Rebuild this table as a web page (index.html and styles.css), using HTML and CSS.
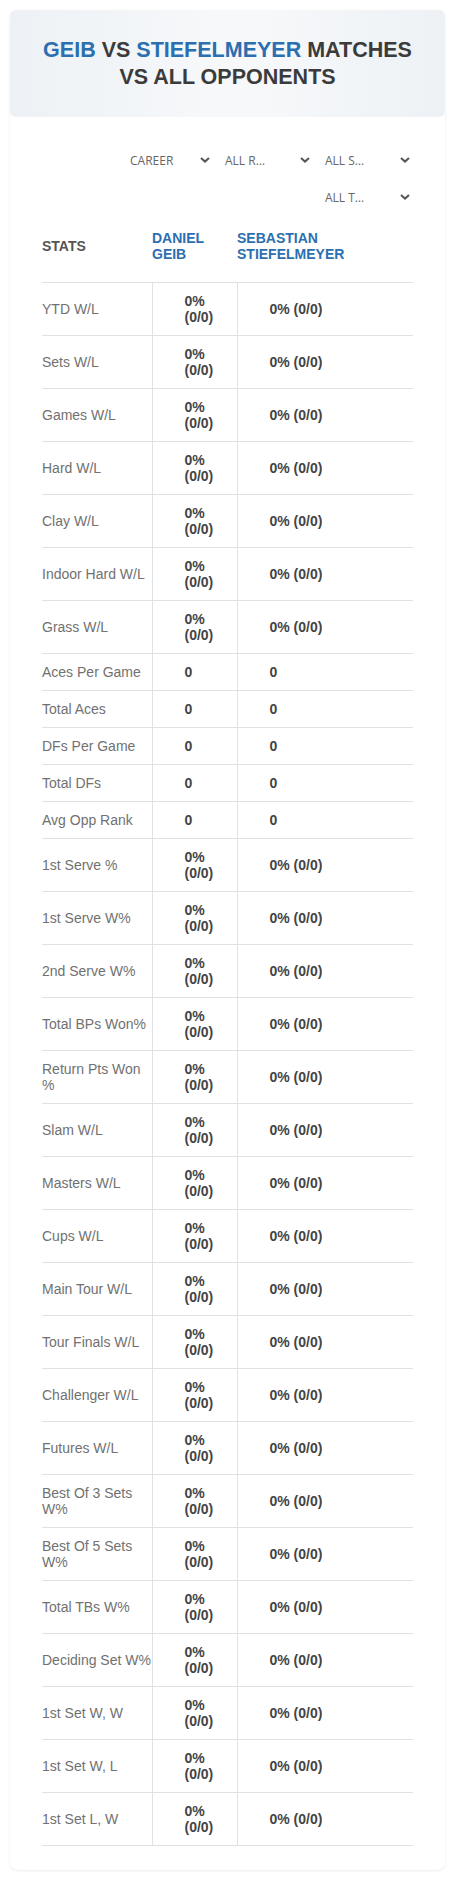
FILE: index.html
```html
<!DOCTYPE html>
<html lang="en">
<head>
    <meta charset="UTF-8">
    <meta name="viewport" content="width=device-width, initial-scale=1.0">
    <title>Geib vs Stiefelmeyer</title>
    <link rel="stylesheet" href="styles.css">
</head>
<body>
    <div class="card">
        <!-- Sarlavha -->
        <div class="title-box">
            <h1><span class="blue">GEIB</span> VS <span class="blue">STIEFELMEYER</span> MATCHES<br>VS ALL OPPONENTS</h1>
        </div>

        <div class="card-body">
            <!-- Filtrlar -->
            <div class="filters">
                <div class="filter first">CAREER<svg class="chev" viewBox="0 0 10 6"><path d="M1 1l4 3.6L9 1" /></svg></div>
                <div class="filter">ALL R…<svg class="chev" viewBox="0 0 10 6"><path d="M1 1l4 3.6L9 1" /></svg></div>
                <div class="filter">ALL S…<svg class="chev" viewBox="0 0 10 6"><path d="M1 1l4 3.6L9 1" /></svg></div>
                <div class="filter">ALL T…<svg class="chev" viewBox="0 0 10 6"><path d="M1 1l4 3.6L9 1" /></svg></div>
            </div>

            <table class="stats">
                <colgroup>
                    <col class="c-label">
                    <col class="c-p1">
                    <col class="c-p2">
                </colgroup>
                <thead>
                    <tr>
                        <th>STATS</th>
                        <th class="player">DANIEL GEIB</th>
                        <th class="player">SEBASTIAN STIEFELMEYER</th>
                    </tr>
                </thead>
                <tbody id="stats-body"></tbody>
            </table>
        </div>
    </div>

    <script>
        const rows = [
            ["YTD W/L", "0% (0/0)"],
            ["Sets W/L", "0% (0/0)"],
            ["Games W/L", "0% (0/0)"],
            ["Hard W/L", "0% (0/0)"],
            ["Clay W/L", "0% (0/0)"],
            ["Indoor Hard W/L", "0% (0/0)"],
            ["Grass W/L", "0% (0/0)"],
            ["Aces Per Game", "0"],
            ["Total Aces", "0"],
            ["DFs Per Game", "0"],
            ["Total DFs", "0"],
            ["Avg Opp Rank", "0"],
            ["1st Serve %", "0% (0/0)"],
            ["1st Serve W%", "0% (0/0)"],
            ["2nd Serve W%", "0% (0/0)"],
            ["Total BPs Won%", "0% (0/0)"],
            ["Return Pts Won %", "0% (0/0)"],
            ["Slam W/L", "0% (0/0)"],
            ["Masters W/L", "0% (0/0)"],
            ["Cups W/L", "0% (0/0)"],
            ["Main Tour W/L", "0% (0/0)"],
            ["Tour Finals W/L", "0% (0/0)"],
            ["Challenger W/L", "0% (0/0)"],
            ["Futures W/L", "0% (0/0)"],
            ["Best Of 3 Sets W%", "0% (0/0)"],
            ["Best Of 5 Sets W%", "0% (0/0)"],
            ["Total TBs W%", "0% (0/0)"],
            ["Deciding Set W%", "0% (0/0)"],
            ["1st Set W, W", "0% (0/0)"],
            ["1st Set W, L", "0% (0/0)"],
            ["1st Set L, W", "0% (0/0)"]
        ];

        const tbody = document.getElementById("stats-body");
        rows.forEach(r => {
            const tr = document.createElement("tr");
            tr.innerHTML = `
                <td class="label">${r[0]}</td>
                <td class="val">${r[1]}</td>
                <td class="val">${r[1]}</td>
            `;
            tbody.appendChild(tr);
        });
    </script>
</body>
</html>
```

FILE: styles.css
```css
body {
    margin: 0;
    background: #fff;
    font-family: "Liberation Sans", Arial, sans-serif;
}
.card {
    margin: 10px;
    background: #fff;
    border-radius: 8px;
    box-shadow: 0 1px 3px rgba(0, 0, 0, 0.08);
    padding-bottom: 24px;
}
.title-box {
    height: 107px;
    display: flex;
    align-items: center;
    justify-content: center;
    padding: 0 20px;
    border-radius: 6px;
    background: linear-gradient(90deg, #edf1f5 0%, #f6f8fa 45%, #f6f8fa 60%, #edf1f5 100%);
}
h1 {
    margin: 0;
    font-size: 21.5px;
    line-height: 27px;
    font-weight: bold;
    color: #3b3b3b;
    text-align: center;
}
.blue {
    color: #2b6fb0;
}
.card-body {
    padding: 0 32px;
}
/* Filtrlar */
.filters {
    display: flex;
    flex-wrap: wrap;
    justify-content: flex-end;
    gap: 7px 10px;
    margin-top: 28px;
    padding-left: 78px;
}
.filter {
    width: 90px;
    height: 30px;
    box-sizing: border-box;
    padding: 0 3px 0 2px;
    display: flex;
    align-items: center;
    justify-content: space-between;
    font-family: "Open Sans", "Noto Sans", sans-serif;
    font-size: 12px;
    color: #666;
}
.filter.first {
    padding-left: 7px;
}
.chev {
    width: 10px;
    height: 6px;
    fill: none;
    stroke: #555;
    stroke-width: 2;
}
/* Jadval */
.stats {
    width: 100%;
    border-collapse: collapse;
    table-layout: fixed;
}
.c-label {
    width: 110px;
}
.c-p1 {
    width: 85px;
}
th {
    text-align: left;
    font-size: 14px;
    line-height: 16px;
    font-weight: bold;
    color: #555;
    padding: 18px 0 20px 0;
    vertical-align: middle;
}
th.player {
    color: #2b6fb0;
}
td {
    font-size: 14px;
    line-height: 16px;
    padding: 10px 0;
    border-top: 1px solid #dfe2e5;
    border-bottom: 1px solid #dfe2e5;
    vertical-align: middle;
}
td.label {
    color: #717171;
}
td.val {
    font-weight: bold;
    color: #444;
    padding-left: 32px;
    padding-right: 32px;
    border-left: 1px solid #dfe2e5;
}
```
